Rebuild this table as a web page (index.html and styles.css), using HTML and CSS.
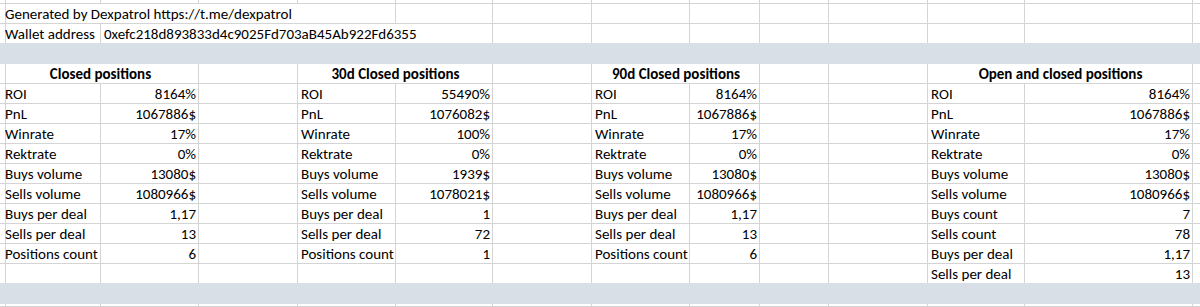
FILE: index.html
```html
<!DOCTYPE html>
<html>
<head>
<meta charset="utf-8">
<link rel="stylesheet" href="styles.css">
</head>
<body>
<div class="sheet">
  <!-- row 0 (partial) -->
  <div class="c"></div><div class="c"></div><div class="c"></div><div class="c"></div><div class="c"></div><div class="c"></div><div class="c"></div><div class="c"></div><div class="c"></div><div class="c"></div><div class="c"></div><div class="c"></div><div class="c"></div><div class="c"></div>

  <!-- row 1 -->
  <div class="c"></div>
  <div class="c span4">Generated by Dexpatrol https://t.me/dexpatrol</div>
  <div class="c"></div><div class="c"></div><div class="c"></div><div class="c"></div><div class="c"></div><div class="c"></div><div class="c"></div><div class="c"></div><div class="c"></div>

  <!-- row 2 -->
  <div class="c"></div>
  <div class="c">Wallet address</div>
  <div class="c span4">0xefc218d893833d4c9025Fd703aB45Ab922Fd6355</div>
  <div class="c"></div><div class="c"></div><div class="c"></div><div class="c"></div><div class="c"></div><div class="c"></div><div class="c"></div><div class="c"></div>

  <div class="band"></div>

  <!-- row 4 headings -->
  <div class="c"></div>
  <div class="c span2 head">Closed positions</div>
  <div class="c"></div>
  <div class="c span2 head">30d Closed positions</div>
  <div class="c"></div>
  <div class="c span2 head">90d Closed positions</div>
  <div class="c"></div><div class="c"></div>
  <div class="c span2 head">Open and closed positions</div>
  <div class="c"></div>

  <!-- ROI -->
  <div class="c"></div>
  <div class="c">ROI</div><div class="c num">8164%</div><div class="c"></div>
  <div class="c">ROI</div><div class="c num">55490%</div><div class="c"></div>
  <div class="c">ROI</div><div class="c num">8164%</div><div class="c"></div><div class="c"></div>
  <div class="c">ROI</div><div class="c num">8164%</div><div class="c"></div>

  <!-- PnL -->
  <div class="c"></div>
  <div class="c">PnL</div><div class="c num">1067886$</div><div class="c"></div>
  <div class="c">PnL</div><div class="c num">1076082$</div><div class="c"></div>
  <div class="c">PnL</div><div class="c num">1067886$</div><div class="c"></div><div class="c"></div>
  <div class="c">PnL</div><div class="c num">1067886$</div><div class="c"></div>

  <!-- Winrate -->
  <div class="c"></div>
  <div class="c">Winrate</div><div class="c num">17%</div><div class="c"></div>
  <div class="c">Winrate</div><div class="c num">100%</div><div class="c"></div>
  <div class="c">Winrate</div><div class="c num">17%</div><div class="c"></div><div class="c"></div>
  <div class="c">Winrate</div><div class="c num">17%</div><div class="c"></div>

  <!-- Rektrate -->
  <div class="c"></div>
  <div class="c">Rektrate</div><div class="c num">0%</div><div class="c"></div>
  <div class="c">Rektrate</div><div class="c num">0%</div><div class="c"></div>
  <div class="c">Rektrate</div><div class="c num">0%</div><div class="c"></div><div class="c"></div>
  <div class="c">Rektrate</div><div class="c num">0%</div><div class="c"></div>

  <!-- Buys volume -->
  <div class="c"></div>
  <div class="c">Buys volume</div><div class="c num">13080$</div><div class="c"></div>
  <div class="c">Buys volume</div><div class="c num">1939$</div><div class="c"></div>
  <div class="c">Buys volume</div><div class="c num">13080$</div><div class="c"></div><div class="c"></div>
  <div class="c">Buys volume</div><div class="c num">13080$</div><div class="c"></div>

  <!-- Sells volume -->
  <div class="c"></div>
  <div class="c">Sells volume</div><div class="c num">1080966$</div><div class="c"></div>
  <div class="c">Sells volume</div><div class="c num">1078021$</div><div class="c"></div>
  <div class="c">Sells volume</div><div class="c num">1080966$</div><div class="c"></div><div class="c"></div>
  <div class="c">Sells volume</div><div class="c num">1080966$</div><div class="c"></div>

  <!-- row 11 -->
  <div class="c"></div>
  <div class="c">Buys per deal</div><div class="c num">1,17</div><div class="c"></div>
  <div class="c">Buys per deal</div><div class="c num">1</div><div class="c"></div>
  <div class="c">Buys per deal</div><div class="c num">1,17</div><div class="c"></div><div class="c"></div>
  <div class="c">Buys count</div><div class="c num">7</div><div class="c"></div>

  <!-- row 12 -->
  <div class="c"></div>
  <div class="c">Sells per deal</div><div class="c num">13</div><div class="c"></div>
  <div class="c">Sells per deal</div><div class="c num">72</div><div class="c"></div>
  <div class="c">Sells per deal</div><div class="c num">13</div><div class="c"></div><div class="c"></div>
  <div class="c">Sells count</div><div class="c num">78</div><div class="c"></div>

  <!-- row 13 -->
  <div class="c"></div>
  <div class="c">Positions count</div><div class="c num">6</div><div class="c"></div>
  <div class="c">Positions count</div><div class="c num">1</div><div class="c"></div>
  <div class="c">Positions count</div><div class="c num">6</div><div class="c"></div><div class="c"></div>
  <div class="c">Buys per deal</div><div class="c num">1,17</div><div class="c"></div>

  <!-- row 14 -->
  <div class="c"></div>
  <div class="c"></div><div class="c"></div><div class="c"></div>
  <div class="c"></div><div class="c"></div><div class="c"></div>
  <div class="c"></div><div class="c"></div><div class="c"></div><div class="c"></div>
  <div class="c">Sells per deal</div><div class="c num">13</div><div class="c"></div>

  <div class="band"></div>

  <!-- row 16 (partial) -->
  <div class="c"></div><div class="c"></div><div class="c"></div><div class="c"></div><div class="c"></div><div class="c"></div><div class="c"></div><div class="c"></div><div class="c"></div><div class="c"></div><div class="c"></div><div class="c"></div><div class="c"></div><div class="c"></div>
</div>
</body>
</html>
```

FILE: styles.css
```css
html, body {
  margin: 0;
  padding: 0;
  background: #ffffff;
  overflow: hidden;
}

.sheet {
  display: grid;
  grid-template-columns: 2px 99px 98px 99px 98px 97px 99px 98px 70px 69px 99px 97px 168px 8px;
  grid-template-rows: 4px repeat(15, 20px) 3px;
  width: 1200px;
  height: 307px;
  overflow: hidden;
  font-family: Carlito, Calibri, Lato, "Open Sans", sans-serif;
  font-size: 15px;
  color: #000000;
}

.c {
  box-sizing: border-box;
  border-right: 1px solid #d4d4d4;
  border-bottom: 1px solid #d4d4d4;
  padding: 0 2px 0 3px;
  line-height: 18px;
  white-space: nowrap;
  overflow: hidden;
  display: flex;
  align-items: flex-end;
}

.span2 {
  grid-column: span 2;
}

.span4 {
  grid-column: span 4;
}

.head {
  font-weight: bold;
  justify-content: center;
}

.num {
  justify-content: flex-end;
}

.band {
  grid-column: 1 / -1;
  background: #d9dfe6;
  box-shadow: 0 -1px 0 #d9dfe6;
}
```
